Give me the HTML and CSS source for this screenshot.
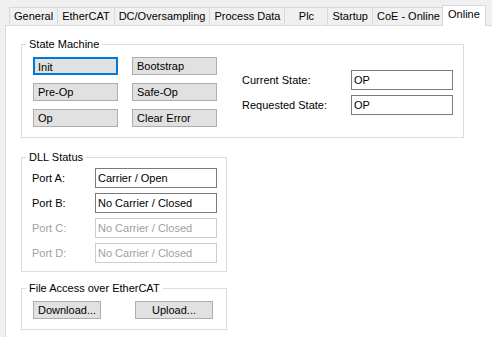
FILE: index.html
```html
<!DOCTYPE html>
<html lang="en">
<head>
  <meta charset="UTF-8" />
  <title>Online</title>
  <link rel="stylesheet" href="styles.css">
</head>
<body>
  <div class="tabs">
    <div class="tab">General</div>
    <div class="tab">EtherCAT</div>
    <div class="tab">DC/Oversampling</div>
    <div class="tab">Process Data</div>
    <div class="tab">Plc</div>
    <div class="tab">Startup</div>
    <div class="tab">CoE - Online</div>
    <div class="tab active">Online</div>
  </div>

  <div class="panel">
    <!-- State Machine -->
    <fieldset class="group state-group">
      <legend>State Machine</legend>
      <div class="state-body">
        <div class="state-buttons">
          <button class="btn focus">Init</button>
          <button class="btn">Bootstrap</button>
          <button class="btn">Pre-Op</button>
          <button class="btn">Safe-Op</button>
          <button class="btn">Op</button>
          <button class="btn">Clear Error</button>
        </div>
        <div class="state-fields">
          <label>Current State:</label>
          <div class="field">OP</div>
          <label>Requested State:</label>
          <div class="field">OP</div>
        </div>
      </div>
    </fieldset>

    <!-- DLL Status -->
    <fieldset class="group dll-group">
      <legend>DLL Status</legend>
      <div class="dll-grid">
        <label>Port A:</label>
        <div class="field">Carrier / Open</div>
        <label>Port B:</label>
        <div class="field">No Carrier / Closed</div>
        <label class="disabled">Port C:</label>
        <div class="field disabled">No Carrier / Closed</div>
        <label class="disabled">Port D:</label>
        <div class="field disabled">No Carrier / Closed</div>
      </div>
    </fieldset>

    <!-- File Access -->
    <fieldset class="group file-group">
      <legend>File Access over EtherCAT</legend>
      <div class="file-buttons">
        <button class="btn centered btn-download">Download...</button>
        <button class="btn centered btn-upload">Upload...</button>
      </div>
    </fieldset>
  </div>
</body>
</html>
```

FILE: styles.css
```css
body {
  margin: 0;
  height: 337px;
  background: #f0f0f0;
  font-family: "Liberation Sans", Arial, sans-serif;
  font-size: 11px;
  color: #000;
  overflow: hidden;
}

/* Tab strip */
.tabs {
  display: flex;
  align-items: flex-end;
  height: 21px;
  margin: 5px 0 -1px 9px;
}

.tab {
  box-sizing: border-box;
  height: 18px;
  min-width: 44px;
  margin: 0 -1px 1px 0;
  padding: 0 4px;
  border: 1px solid #d9d9d9;
  border-bottom: none;
  background: #f0f0f0;
  line-height: 17px;
  text-align: center;
}

.tab.active {
  position: relative;
  z-index: 1;
  height: 21px;
  margin: 0 0 0 -2px;
  padding: 0 5px;
  background: #fff;
  line-height: 16px;
}

/* the page panel runs past the right and bottom edges */
.panel {
  box-sizing: border-box;
  height: 312px;
  margin-left: 5px;
  padding: 12px 0 0 15px;
  background: #fff;
  border: 1px solid #d9d9d9;
  border-right: none;
  border-bottom: none;
}

/* Group boxes */
.group {
  box-sizing: border-box;
  min-width: 0;
  margin: 0;
  padding: 0;
  border: 1px solid #dcdcdc;
}

.group legend {
  margin-left: 4px;
  padding: 0 3px;
  line-height: 13px;
}

.state-group {
  width: 443px;
}

.dll-group {
  width: 206px;
  margin-top: 13px;
}

.file-group {
  width: 206px;
  margin-top: 10px;
}

/* Buttons */
.btn {
  box-sizing: border-box;
  height: 18px;
  margin: 0;
  padding: 0 4px;
  border: 1px solid #adadad;
  background: #e1e1e1;
  font: inherit;
  color: #000;
  line-height: 16px;
  text-align: left;
}

.btn.focus {
  border: 2px solid #0078d7;
  padding: 0 3px;
}

.btn.centered {
  text-align: center;
}

/* Text boxes */
.field {
  box-sizing: border-box;
  height: 20px;
  padding: 0 2px;
  border: 1px solid #7a7a7a;
  background: #fff;
  line-height: 18px;
  white-space: nowrap;
}

.field.disabled {
  border-color: #cccccc;
  color: #a0a0a0;
}

label.disabled {
  color: #a0a0a0;
}

/* State machine layout */
.state-body {
  display: flex;
  align-items: center;
  padding: 6px 0 10px 11px;
}

.state-buttons {
  display: grid;
  grid-template-columns: 85px 85px;
  column-gap: 14px;
  row-gap: 8px;
}

.state-fields {
  display: grid;
  grid-template-columns: 109px 102px;
  row-gap: 5px;
  align-items: center;
  margin-left: 25px;
}

/* DLL layout */
.dll-grid {
  display: grid;
  grid-template-columns: 63px 122px;
  row-gap: 5px;
  align-items: center;
  padding: 4px 0 8px 10px;
}

/* File access */
.file-buttons {
  display: flex;
  gap: 34px;
  padding: 6px 0 10px 11px;
}

.btn-download {
  width: 68px;
}

.btn-upload {
  width: 78px;
}
```
